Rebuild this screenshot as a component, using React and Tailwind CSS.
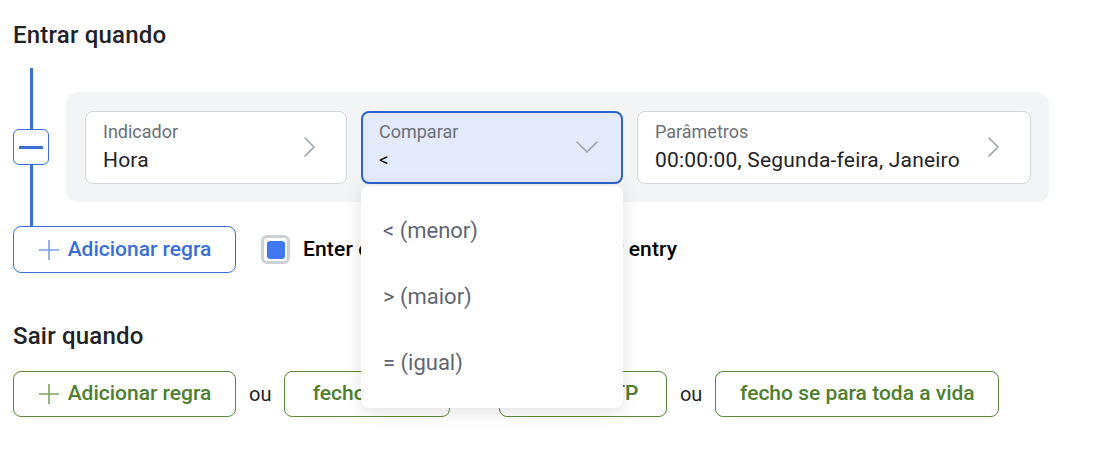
import React from 'react';

const ChevronRight = () => (
  <svg width="14" height="22" viewBox="0 0 14 22" fill="none" stroke="#9ca3af" strokeWidth="1.6" strokeLinecap="round" strokeLinejoin="round">
    <path d="M3 2l9 9-9 9" />
  </svg>
);

const ChevronDown = () => (
  <svg width="24" height="14" viewBox="0 0 24 14" fill="none" stroke="#9ca3af" strokeWidth="1.6" strokeLinecap="round" strokeLinejoin="round">
    <path d="M2 2l10 10 10-10" />
  </svg>
);

const Plus = ({ color }) => (
  <svg width="22" height="22" viewBox="0 0 22 22" fill="none" stroke={color} strokeWidth="1.6">
    <path d="M11 1v20M1 11h20" />
  </svg>
);

function Field({ label, value, width, icon }) {
  return (
    <div className={`${width} h-[73px] bg-white border border-[#d3d6db] rounded-lg flex items-center justify-between pl-[17px] pr-[30px]`}>
      <div className="flex flex-col">
        <span className="text-[18px] leading-[20px] text-[#6b7079]">{label}</span>
        <span className="mt-[6px] text-[21px] leading-[24px] tracking-[0.2px] text-[#1f2328]">{value}</span>
      </div>
      {icon}
    </div>
  );
}

export default function App() {
  const items = ['< (menor)', '> (maior)', '= (igual)'];

  return (
    <div className="w-[1120px] h-[456px] bg-white px-[13px] pt-[21px] font-['Roboto',sans-serif] overflow-hidden">
      {/* ENTRAR */}
      <h2 className="text-[24px] leading-[28px] font-medium tracking-[0.2px] text-[#1f2328]">Entrar quando</h2>

      <div className="flex mt-[19px]">
        <div className="w-[36px] flex flex-col items-center">
          <div className="w-[3px] flex-1 bg-[#3a6fd8]" />
          <button className="w-[36px] h-[36px] rounded-md border border-[#3a6fd8] bg-white flex items-center justify-center">
            <span className="block w-[24px] h-[3px] bg-[#3a6fd8]" />
          </button>
          <div className="w-[3px] flex-1 bg-[#3a6fd8]" />
        </div>

        <div className="ml-[17px] py-[24px]">
          <div className="w-[983px] h-[110px] bg-[#f3f4f6] rounded-xl flex items-center gap-[14px] pl-[19px] pr-[18px]">
            <Field label="Indicador" value="Hora" width="w-[262px]" icon={<ChevronRight />} />

            <div className="relative">
              <div className="w-[262px] h-[73px] bg-[#e3ebfa] border-2 border-[#2c62cc] rounded-lg flex items-center justify-between pl-[16px] pr-[22px]">
                <div className="flex flex-col">
                  <span className="text-[18px] leading-[20px] text-[#6b7079]">Comparar</span>
                  <span className="mt-[6px] text-[19px] leading-[24px] text-[#111]">&lt;</span>
                </div>
                <ChevronDown />
              </div>
              <div className="absolute left-0 top-[75px] w-[262px] bg-white rounded-lg shadow-[0_4px_18px_rgba(0,0,0,0.12)] py-[12px] z-10">
                {items.map(it => (
                  <div key={it} className="h-[66px] flex items-center pl-[22px] text-[22px] text-[#5f6672]">{it}</div>
                ))}
              </div>
            </div>

            <Field label="Parâmetros" value="00:00:00, Segunda-feira, Janeiro" width="w-[394px]" icon={<ChevronRight />} />
          </div>
        </div>
      </div>

      <div className="flex items-center">
        <button className="w-[223px] h-[47px] rounded-lg border border-[#3a6fd8] bg-white flex items-center justify-center gap-[8px] text-[21px] font-medium text-[#3a6fd8]">
          <Plus color="#7a9fe6" />
          Adicionar regra
        </button>
        <div className="ml-[25px] w-[29px] h-[29px] rounded-md border-[3px] border-[#cdd0d5] flex items-center justify-center">
          <span className="block w-[18px] h-[18px] rounded-[3px] bg-[#4078f2]" />
        </div>
        <span className="ml-[13px] text-[21px] font-medium tracking-[0.15px] text-black whitespace-nowrap">Enter only once per candle on any entry</span>
      </div>

      {/* SAIR */}
      <h2 className="mt-[49px] text-[24px] leading-[28px] font-medium tracking-[0.2px] text-[#1f2328]">Sair quando</h2>

      <div className="flex items-center mt-[21px] gap-[13px] text-[21px]">
        <button className="w-[223px] h-[46px] rounded-lg border border-[#5b8a3b] bg-white flex items-center justify-center gap-[8px] font-medium text-[#4f7f2e]">
          <Plus color="#7ba560" />
          Adicionar regra
        </button>
        <span className="text-[20px] text-[#1f2328]">ou</span>
        <button className="w-[166px] h-[46px] rounded-lg border border-[#5b8a3b] bg-white font-medium text-[#4f7f2e]">fecho se SL</button>
        <span className="text-[20px] text-[#1f2328]">ou</span>
        <button className="w-[168px] h-[46px] rounded-lg border border-[#5b8a3b] bg-white font-medium text-[#4f7f2e]">fecho se TP</button>
        <span className="text-[20px] text-[#1f2328]">ou</span>
        <button className="w-[284px] h-[46px] rounded-lg border border-[#5b8a3b] bg-white font-medium text-[#4f7f2e]">fecho se para toda a vida</button>
      </div>
    </div>
  );
}
